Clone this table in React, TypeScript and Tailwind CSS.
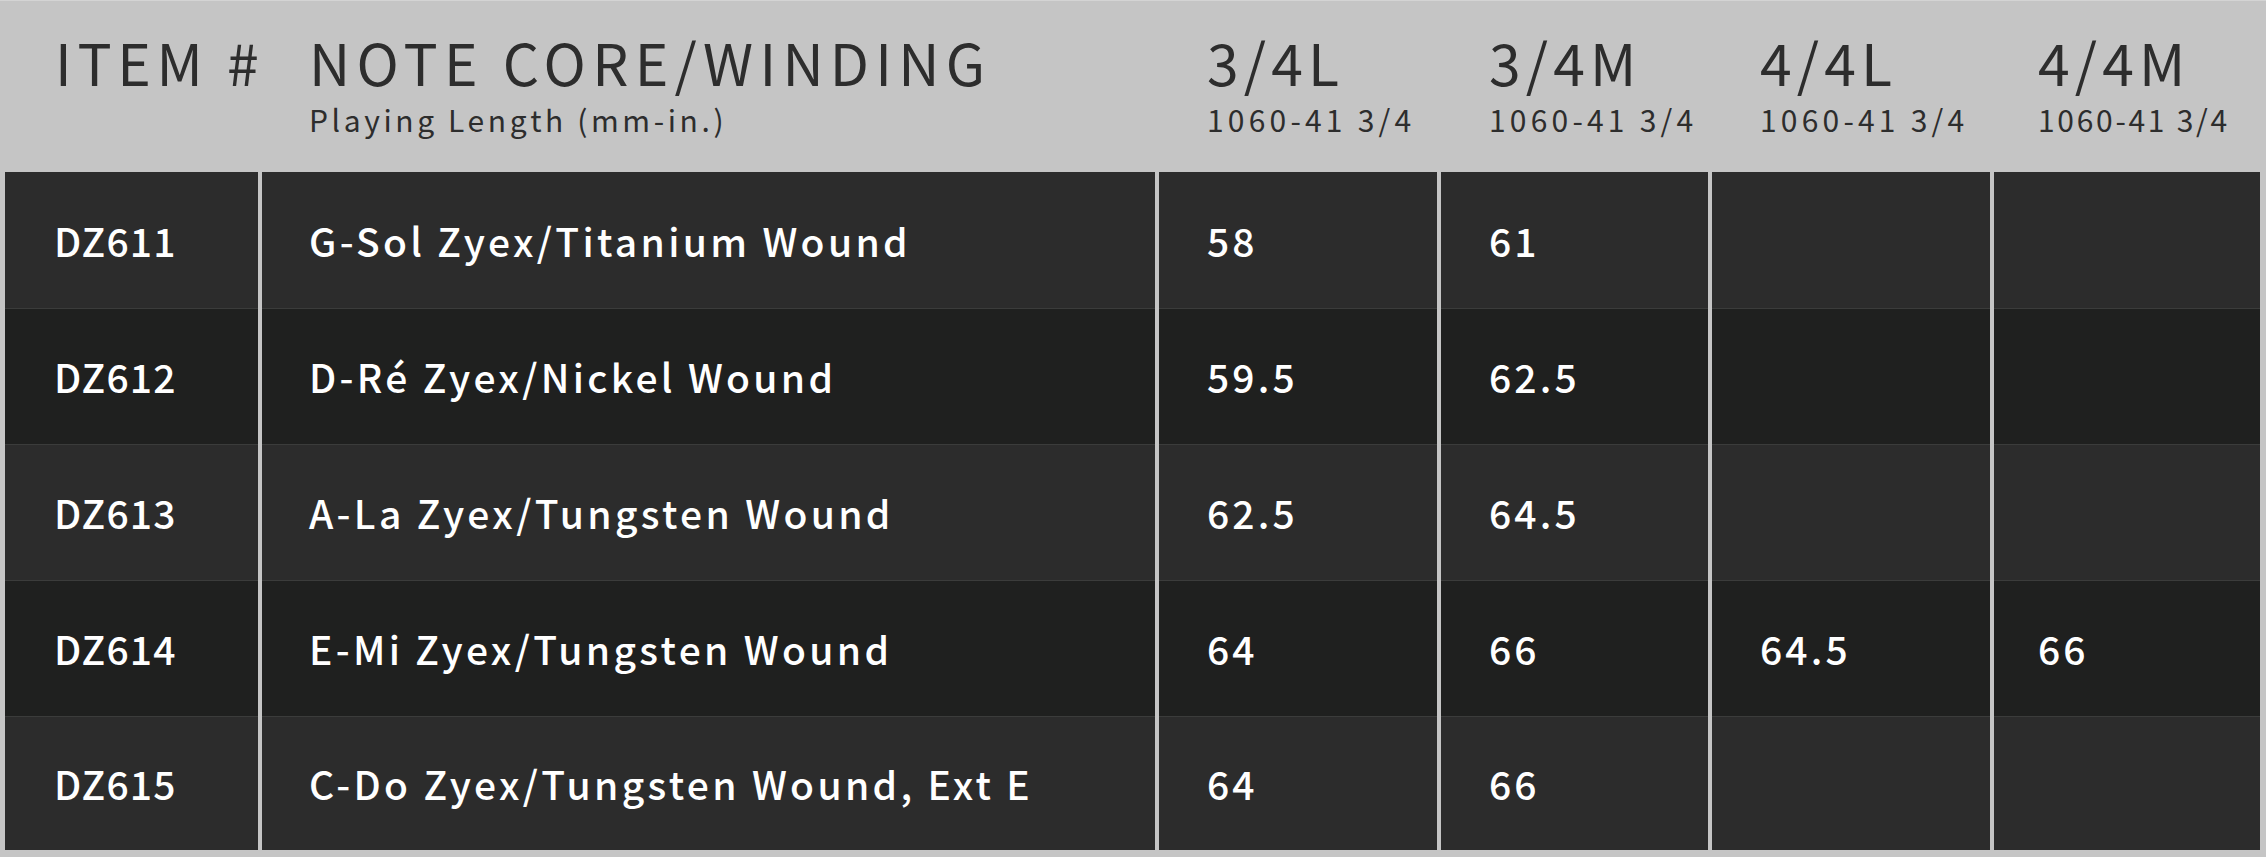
import React from 'react';

const font = { fontFamily: '"Noto Sans CJK JP", "Noto Sans", sans-serif' };

const sizes = [
  { label: '3/4L', length: '1060-41 3/4' },
  { label: '3/4M', length: '1060-41 3/4' },
  { label: '4/4L', length: '1060-41 3/4' },
  { label: '4/4M', length: '1060-41 3/4' },
];

const rows = [
  { item: 'DZ611', note: 'G-Sol Zyex/Titanium Wound', values: ['58', '61', '', ''] },
  { item: 'DZ612', note: 'D-Ré Zyex/Nickel Wound', values: ['59.5', '62.5', '', ''] },
  { item: 'DZ613', note: 'A-La Zyex/Tungsten Wound', values: ['62.5', '64.5', '', ''] },
  { item: 'DZ614', note: 'E-Mi Zyex/Tungsten Wound', values: ['64', '66', '64.5', '66'] },
  { item: 'DZ615', note: 'C-Do Zyex/Tungsten Wound, Ext E', values: ['64', '66', '', ''] },
];

const App: React.FC = () => {
  return (
    <div className="w-[2266px] h-[857px] bg-[#c5c5c5] pl-[5px] pr-[6px] pb-[5px] border-t border-[#d4d4d4]" style={font}>
      <div className="grid grid-cols-[253px_893px_278px_267px_278px_266px] gap-x-[4px]">
        {/* header */}
        <div className="h-[171px] pl-[50px] pt-[27px] text-[#2d2d2d]">
          <div className="text-[57px] font-normal leading-[66px] tracking-[0.1em] whitespace-nowrap">ITEM #</div>
        </div>
        <div className="h-[171px] pl-[47px] pt-[27px] text-[#2d2d2d]">
          <div className="text-[57px] font-normal leading-[66px] tracking-[0.11em] whitespace-nowrap">NOTE CORE/WINDING</div>
          <div className="mt-[7px] text-[30px] font-normal leading-[36px] tracking-[0.12em] whitespace-nowrap">Playing Length (mm-in.)</div>
        </div>
        {sizes.map((s, i) => (
          <div key={s.label} className={`h-[171px] pt-[27px] text-[#2d2d2d] ${i === 3 ? 'pl-[44px]' : 'pl-[48px]'}`}>
            <div className="text-[57px] font-normal leading-[66px] tracking-[0.09em]">{s.label}</div>
            <div className={`mt-[7px] text-[30px] font-normal leading-[36px] whitespace-nowrap ${i === 3 ? 'tracking-[0.09em]' : 'tracking-[0.14em]'}`}>
              {s.length}
            </div>
          </div>
        ))}

        {/* body */}
        {rows.map((r, ri) => {
          const bg = ri % 2 === 0 ? 'bg-[#2c2c2c]' : 'bg-[#1f201f]';
          const line = ri === 0 ? '' : 'border-t border-[#3b3c3b]';
          const h = ri === 4 ? 'h-[134px]' : 'h-[136px]';
          const cell = `${bg} ${line} ${h} flex items-center text-white text-[39px] font-medium whitespace-nowrap`;
          return (
            <React.Fragment key={r.item}>
              <div className={`${cell} pl-[49px] tracking-[0.03em]`}>{r.item}</div>
              <div className={`${cell} pl-[47px] tracking-[0.085em]`}>{r.note}</div>
              {r.values.map((v, vi) => (
                <div key={vi} className={`${cell} tracking-[0.08em] ${vi === 3 ? 'pl-[44px]' : 'pl-[48px]'}`}>{v}</div>
              ))}
            </React.Fragment>
          );
        })}
      </div>
    </div>
  );
};

export default App;
